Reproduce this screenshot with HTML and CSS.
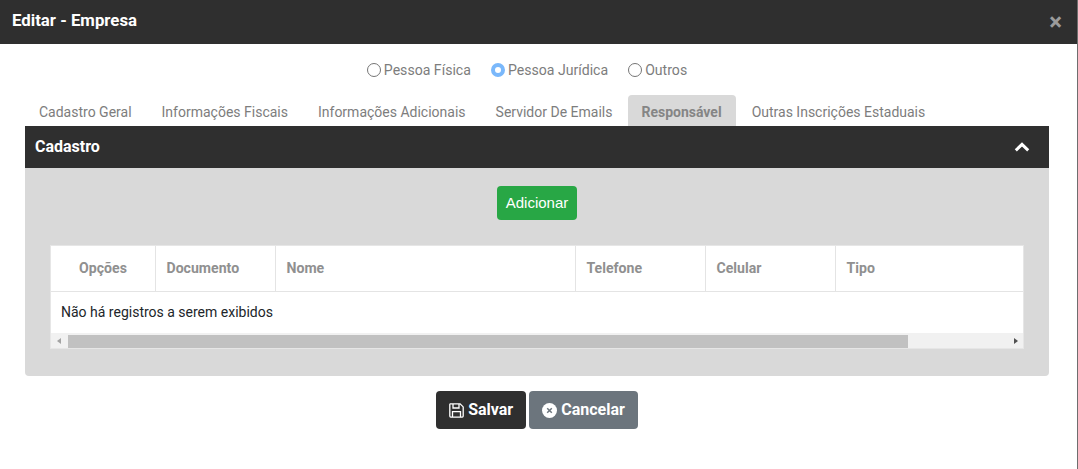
FILE: index.html
```html
<!DOCTYPE html>
<html lang="pt">
<head>
<meta charset="utf-8">
<title>Editar - Empresa</title>
<link rel="stylesheet" href="styles.css">
</head>
<body>
<div class="modal">
  <header class="modal-head">
    <h1 class="modal-title">Editar - Empresa</h1>
    <span class="modal-close">&times;</span>
  </header>
  <div class="modal-body">
    <div class="radios">
      <label class="radio"><span class="radio-dot"></span>Pessoa Física</label>
      <label class="radio"><span class="radio-dot radio-on"></span>Pessoa Jurídica</label>
      <label class="radio"><span class="radio-dot"></span>Outros</label>
    </div>
    <nav class="tabs">
      <a class="tab">Cadastro Geral</a>
      <a class="tab">Informações Fiscais</a>
      <a class="tab">Informações Adicionais</a>
      <a class="tab">Servidor De Emails</a>
      <a class="tab tab-active">Responsável</a>
      <a class="tab">Outras Inscrições Estaduais</a>
    </nav>
    <section class="panel">
      <div class="panel-head">
        <h2 class="panel-title">Cadastro</h2>
        <svg class="chevron" width="16" height="10" viewBox="0 0 16 10"><path d="M1.8 8.4 8 2.4l6.2 6" fill="none" stroke="#fff" stroke-width="3"/></svg>
      </div>
      <div class="panel-body">
        <button class="btn-add">Adicionar</button>
        <div class="grid">
          <div class="grid-row grid-header">
            <div class="cell cell-opt">Opções</div>
            <div class="cell cell-doc">Documento</div>
            <div class="cell cell-nome">Nome</div>
            <div class="cell cell-tel">Telefone</div>
            <div class="cell cell-cel">Celular</div>
            <div class="cell cell-tipo">Tipo</div>
          </div>
          <div class="grid-empty">Não há registros a serem exibidos</div>
          <div class="scrollbar">
            <span class="arrow arrow-left"></span>
            <div class="track"><div class="thumb"></div></div>
            <span class="arrow arrow-right"></span>
          </div>
        </div>
      </div>
    </section>
    <div class="actions">
      <button class="btn btn-dark">
        <svg class="btn-icon" width="15" height="15" viewBox="0 0 15 15"><path d="M1.2.8h9.900l3.100 3.100v9.200a1 1 0 0 1-1 1H1.800a1 1 0 0 1-1-1V1.400z" fill="none" stroke="#fff" stroke-width="1.300"/><path d="M4 1v4h6V1M3.500 14V8.700h8V14" fill="none" stroke="#fff" stroke-width="1.300"/></svg>
        Salvar
      </button>
      <button class="btn btn-gray">
        <svg class="btn-icon" width="15" height="15" viewBox="0 0 15 15"><circle cx="7.500" cy="7.500" r="7.500" fill="#fff"/><path d="M5.200 5.200l4.600 4.600M9.800 5.200l-4.600 4.600" stroke="#6c757d" stroke-width="1.500"/></svg>
        Cancelar
      </button>
    </div>
  </div>
</div>
</body>
</html>
```
FILE: styles.css
```css
* { box-sizing: border-box; }
html, body { margin: 0; height: 100%; overflow: hidden; background: #fff; }
body { font-family: Roboto, "Liberation Sans", sans-serif; font-size: 14px; color: #212529; }
.modal { height: 469px; border-right: 1px solid #6e6e6e; }
.modal-head { height: 44px; background: #2f2f2f; display: flex; align-items: center; justify-content: space-between; padding: 0 15px 0 12px; }
.modal-title { margin: 0 0 4px; font-size: 16.8px; font-weight: 700; color: #fff; line-height: 40px; }
.modal-close { color: #9b9b9b; font-size: 24px; font-weight: 700; line-height: 44px; height: 44px; }
.modal-body { padding: 0 28px 0 25px; }
.radios { display: flex; justify-content: center; gap: 20px; height: 51px; padding-top: 16px; padding-right: 20px; }
.radio { display: flex; align-items: center; height: 20px; color: #7d7d7d; font-size: 14.1px; gap: 3px; }
.radio-dot { width: 14px; height: 14px; border: 1px solid #757575; border-radius: 50%; background: #fff; }
.radio-on { border: 4px solid #7ab8fb; }
.tabs { display: flex; height: 31px; margin-left: -1px; }
.tab { padding: 0 15px; line-height: 34px; color: #7d7d7d; font-size: 14px; white-space: nowrap; }
.tab-active { background: #d9d9d9; color: #858585; font-weight: 700; border-radius: 4px 4px 0 0; padding: 0 14px 0 13px; margin: 0 1px; }
.panel-head { height: 42px; background: #2f2f2f; display: flex; align-items: center; justify-content: space-between; padding: 0 19px 2px 10px; }
.panel-title { margin: 0; font-size: 16px; font-weight: 700; color: #fff; }
.chevron { display: block; margin-top: 2px; }
.panel-body { background: #d9d9d9; height: 208px; border-radius: 0 0 4px 4px; display: flex; flex-direction: column; align-items: center; padding: 18px 25px 0; }
.btn-add { width: 80px; height: 34px; background: #28a745; color: #fff; border: 0; border-radius: 4px; font: 400 15px "Liberation Sans", Arial, sans-serif; padding: 0 0 2px; }
.grid { width: 100%; margin-top: 25px; background: #fff; border: 1px solid #e6e6e6; }
.grid-row { display: flex; }
.grid-header { height: 46px; border-bottom: 1px solid #e4e4e4; }
.cell { padding: 0 10px 0 10.5px; font-weight: 700; color: #909090; font-size: 14.1px; line-height: 44px; border-right: 1px solid #e4e4e4; }
.cell-opt { width: 105px; text-align: center; padding: 0; }
.cell-doc { width: 120px; }
.cell-nome { width: 300px; }
.cell-tel { width: 130px; }
.cell-cel { width: 130px; }
.cell-tipo { flex: 1; border-right: 0; }
.grid-empty { height: 41px; padding: 0 10px; line-height: 41px; color: #212529; font-size: 14px; }
.scrollbar { height: 15px; background: #f1f1f1; display: flex; align-items: center; padding-top: 1px; }
.arrow { width: 17px; height: 13px; position: relative; flex: none; }
.arrow::after { content: ""; position: absolute; top: 3px; border: 3.500px solid transparent; }
.arrow-left::after { left: 3px; border-right: 4px solid #a3a3a3; }
.arrow-right::after { right: 2px; border-left: 4px solid #505050; }
.track { flex: 1; height: 13px; }
.thumb { width: 840px; height: 13px; background: #c1c1c1; }
.actions { display: flex; justify-content: center; gap: 3px; margin-top: 15px; }
.btn { height: 38px; display: flex; align-items: center; gap: 4px; border: 0; border-radius: 4px; color: #fff; font: 700 16px Roboto, sans-serif; padding: 0 13px 2px; }
.btn-icon { margin-top: 2px; }
.btn-dark { background: #2f2f2f; }
.btn-gray { background: #6c757d; }
```
